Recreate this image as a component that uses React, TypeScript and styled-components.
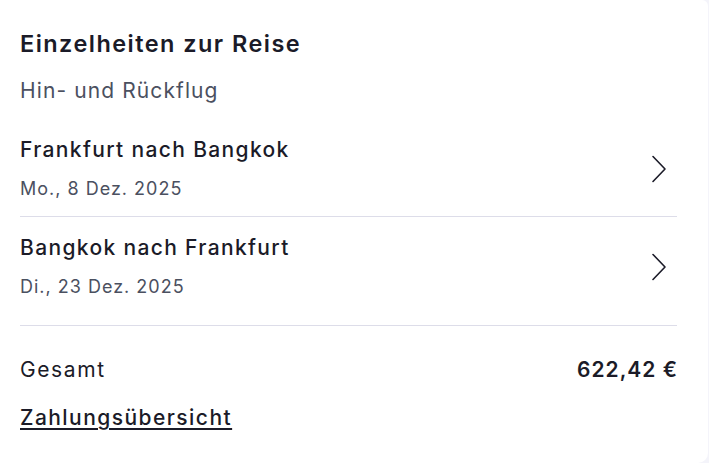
import React from 'react';
import styled, { createGlobalStyle } from 'styled-components';

const GlobalStyle = createGlobalStyle`
  html, body {
    margin: 0;
    padding: 0;
    background: #f4f4fa;
  }
  body {
    font-family: Inter, "Liberation Sans", sans-serif;
    color: #1b1b28;
  }
`;

interface Leg {
  route: string;
  date: string;
}

const legs: Leg[] = [
  { route: 'Frankfurt nach Bangkok', date: 'Mo., 8 Dez. 2025' },
  { route: 'Bangkok nach Frankfurt', date: 'Di., 23 Dez. 2025' },
];

const Card = styled.section`
  box-sizing: border-box;
  width: 708px;
  height: 463px;
  background: #ffffff;
  border-radius: 0 6px 10px 0;
  padding: 29px 31px 0 20px;
`;

const Title = styled.h2`
  margin: 0;
  font-size: 23.5px;
  line-height: 29px;
  font-weight: 600;
  letter-spacing: 1.45px;
`;

const TripType = styled.p`
  margin: 19px 0 14px;
  font-size: 21px;
  line-height: 28px;
  font-weight: 400;
  letter-spacing: 1.1px;
  color: #4b5060;
`;

const LegList = styled.ul`
  list-style: none;
  margin: 0;
  padding: 0 0 11px;
  border-bottom: 1px solid #dddde9;
`;

const LegRow = styled.li<{ $last?: boolean }>`
  display: flex;
  align-items: center;
  justify-content: space-between;
  padding: 17px 0 15px;
  border-bottom: ${({ $last }) => ($last ? 'none' : '1px solid #dddde9')};
`;

const LegInfo = styled.div`
  display: flex;
  flex-direction: column;
  gap: 13px;
`;

const Route = styled.span`
  font-size: 21px;
  line-height: 28px;
  font-weight: 500;
  letter-spacing: 1.35px;
`;

const LegDate = styled.span`
  font-size: 18px;
  line-height: 24px;
  letter-spacing: 1px;
  color: #4b5060;
`;

const Chevron = styled.svg`
  width: 16px;
  height: 28px;
  margin-right: 10px;
  flex-shrink: 0;
`;

const TotalRow = styled.div`
  display: flex;
  justify-content: space-between;
  align-items: baseline;
  margin-top: 30px;
  font-size: 21px;
  line-height: 28px;
`;

const TotalLabel = styled.span`
  font-weight: 400;
  letter-spacing: 1.6px;
`;

const TotalAmount = styled.span`
  font-weight: 600;
  letter-spacing: 1px;
  margin-right: -1px;
`;

const PaymentLink = styled.a`
  display: inline-block;
  margin-top: 20px;
  font-size: 21px;
  line-height: 28px;
  font-weight: 500;
  letter-spacing: 1.45px;
  color: #1b1b28;
  text-decoration: underline;
  text-decoration-thickness: 2px;
  text-underline-offset: 3px;
`;

const ChevronIcon = () => (
  <Chevron viewBox="0 0 16 28" fill="none">
    <path d="M2 1.5 L14 14 L2 26.5" stroke="#1b1b28" strokeWidth="1.6" strokeLinecap="round" strokeLinejoin="round" />
  </Chevron>
);

export default function App() {
  return (
    <>
      <GlobalStyle />
      <Card>
        <Title>Einzelheiten zur Reise</Title>
        <TripType>Hin- und Rückflug</TripType>
        <LegList>
          {legs.map((leg, i) => (
            <LegRow key={leg.route} $last={i === legs.length - 1}>
              <LegInfo>
                <Route>{leg.route}</Route>
                <LegDate>{leg.date}</LegDate>
              </LegInfo>
              <ChevronIcon />
            </LegRow>
          ))}
        </LegList>
        <TotalRow>
          <TotalLabel>Gesamt</TotalLabel>
          <TotalAmount>622,42 €</TotalAmount>
        </TotalRow>
        <PaymentLink href="#">Zahlungsübersicht</PaymentLink>
      </Card>
    </>
  );
}
